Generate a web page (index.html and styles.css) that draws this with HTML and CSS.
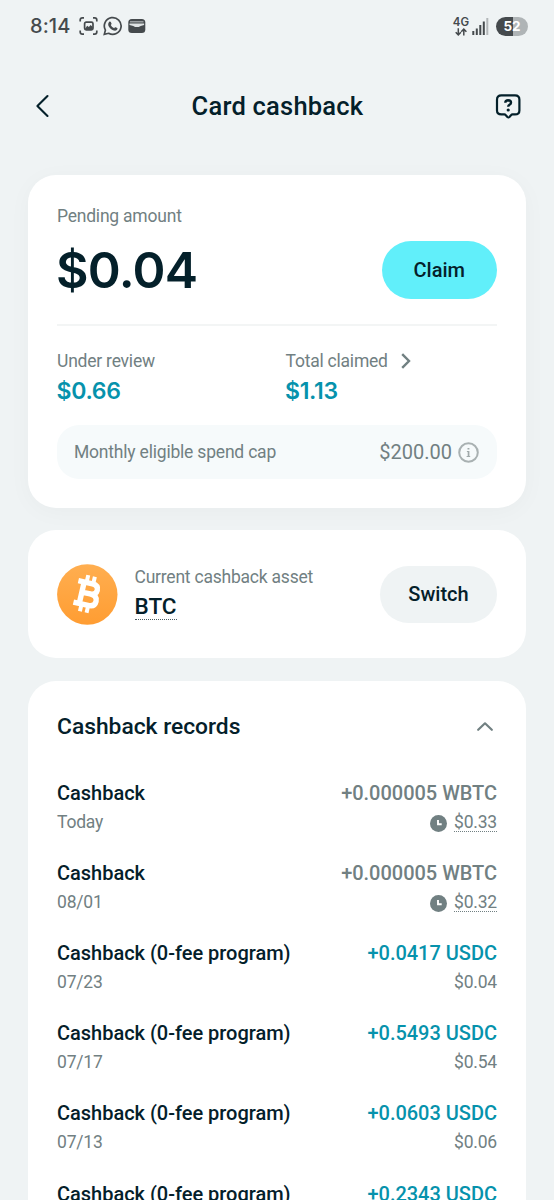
FILE: index.html
```html
<!DOCTYPE html>
<html lang="en">
<head>
<meta charset="utf-8">
<title>Card cashback</title>
<link rel="stylesheet" href="styles.css">
</head>
<body>
<div class="screen">
  <div class="status">
    <span class="time">8:14</span>
    <svg class="status-icons" width="68" height="20" viewBox="0 0 68 20" fill="none" stroke="#454a4d" stroke-width="1.7">
      <path d="M1.200 5.500V4Q1.200 1.800 3.400 1.800H5M14 1.800H15.600Q17.800 1.800 17.800 4V5.500M17.800 14.500V16Q17.800 18.200 15.600 18.200H14M5 18.200H3.400Q1.200 18.200 1.200 16V14.500"/>
      <rect x="5.600" y="6.200" width="8.400" height="7.600" rx="1.600"/>
      <path d="M6 12.800l2.200-3 1.700 1.200 1.700-1.900 2.200 2v2H6z" fill="#454a4d" stroke="none"/>
      <path d="M25.300 18.400l1.100-4.300a8.400 8.400 0 1 1 3.200 3.200z"/>
      <path d="M30.300 5.700c.5-.5 1.200-.4 1.500.2l.7 1.600c.2.500-.4 1.100-.7 1.500.7 1.500 1.800 2.500 3.300 3.200.5-.4.900-1.200 1.500-.9l1.600.8c.9.600-.1 2.200-1.200 2.500-3.600.7-8.600-4-7.700-7.200.2-.7.600-1.300 1-1.700z" fill="#454a4d" stroke="none"/>
      <rect x="49.300" y="3" width="17" height="14" rx="3.500" fill="#454a4d" stroke="none"/>
      <path d="M51 5.800h13.500" stroke="#a9adaf" stroke-width="1.300"/>
      <path d="M50.500 7.600h14.600v1.500l-3.400.8q-4 2.400-7.400 0l-3.800-.8z" fill="#dfe3e4" stroke="none"/>
    </svg>
    <div class="network">
      <span class="net-label">4G</span>
      <svg width="12" height="8" viewBox="0 0 12 8" fill="none" stroke="#454a4d" stroke-width="1.500"><path d="M3.300.3v6.400M.7 4.300l2.600 2.600 2.600-2.600M8.800 7.600V1.200M6.200 3.700l2.600-2.600 2.600 2.600"/></svg>
    </div>
    <svg class="signal" width="17" height="17" viewBox="0 0 17 17"><path d="M.3 13h2v4h-2zM3.800 10.500h2V17h-2zM7.300 7h2v10h-2zM10.800 3.500h2V17h-2z" fill="#454a4d"/><path d="M14.300 0h2v17h-2z" fill="#b3b7b9"/></svg>
    <div class="battery">52</div>
  </div>

  <header class="topbar">
    <svg width="16" height="24" viewBox="0 0 16 24" fill="none" stroke="#04202a" stroke-width="2.100"><path d="M12.500 2L2.400 12 12.500 22" stroke-linecap="round" stroke-linejoin="round"/></svg>
    <h1>Card cashback</h1>
    <svg width="26" height="28" viewBox="0 0 26 28" fill="none" stroke="#04202a" stroke-width="2.200" stroke-linejoin="round"><path d="M6.400 3.300H20Q24.400 3.300 24.400 7.700V18.400Q24.400 22.400 20 22.400H17.500Q16.700 22.400 16.200 23L14.400 25Q13.400 26 12.400 25L10.600 23Q10.100 22.400 9.300 22.400H6.400Q2 22.400 2 18.400V7.700Q2 3.300 6.400 3.300Z"/><path d="M10.300 10.800Q10.400 8.300 13.200 8.300 16 8.400 16 10.700 16 12 14.500 12.800 13.200 13.600 13.200 14.800" stroke-width="2.400"/><circle cx="13.200" cy="18" r="1.600" fill="#04202a" stroke="none"/></svg>
  </header>

  <main>
    <section class="card summary">
      <div class="label">Pending amount</div>
      <div class="pending"><span class="big">$0.04</span><button class="btn claim">Claim</button></div>
      <div class="stats">
        <div><div class="label">Under review</div><div class="stat">$0.66</div></div>
        <div><div class="label">Total claimed <svg width="10" height="16" viewBox="0 0 10 16" fill="none" stroke="#718082" stroke-width="2.400"><path d="M1.200 1.200L8 8 1.200 14.800"/></svg></div><div class="stat">$1.13</div></div>
      </div>
      <div class="cap">
        <span class="cap-name">Monthly eligible spend cap</span>
        <span class="cap-value">$200.00</span>
        <svg width="21" height="21" viewBox="0 0 21 21"><circle cx="10.500" cy="10.500" r="9.300" fill="none" stroke="#a9b1b2" stroke-width="2"/><path d="M9.500 5.900h1.900v1.700H9.500zM8.900 9h2.500v4.900h.8V15H8.600v-1.100h1.100v-3.800h-.8z" fill="#a0a9aa"/></svg>
      </div>
    </section>

    <section class="card asset">
      <svg width="61" height="61" viewBox="0 0 61 61">
        <defs><linearGradient id="coin" x1="0" y1="0" x2="0" y2="1"><stop offset="0" stop-color="#ffae50"/><stop offset="1" stop-color="#ff9d32"/></linearGradient></defs>
        <circle cx="30.300" cy="30.500" r="30.200" fill="url(#coin)"/>
        <g transform="translate(30.600 30) rotate(13)" fill="none" stroke="#fff">
          <path d="M-12-11H2.500Q8.600-11 8.600-5.700 8.600-.6 2.500-.6H-5M2.500-.6Q9.900-.4 9.900 5.200 9.900 11 3 11H-12M-6-11V11" stroke-width="5.400"/>
          <path d="M-3.600-18.500V-12M3.200-18.500V-12M-3.600 12V18.500M3.200 12V18.500" stroke-width="4"/>
        </g>
      </svg>
      <div class="asset-text"><div class="label">Current cashback asset</div><span class="ticker">BTC</span></div>
      <button class="btn switch">Switch</button>
    </section>

    <section class="card records">
      <div class="records-head"><h2>Cashback records</h2><svg width="16" height="10" viewBox="0 0 16 10" fill="none" stroke="#718082" stroke-width="2.200"><path d="M1.200 7.800L8 1.300 14.800 7.800" stroke-linecap="round" stroke-linejoin="round"/></svg></div>
      <div class="record"><span class="title">Cashback</span><span class="amount review">+0.000005 WBTC</span><span class="date">Today</span><span class="fiat"><svg class="clock" width="17" height="17" viewBox="0 0 17 17"><circle cx="8.500" cy="8.500" r="8.500" fill="#718082"/><path d="M8 5v4.200h3.700" fill="none" stroke="#fff" stroke-width="1.900"/></svg><span class="dotted">$0.33</span></span></div>
      <div class="record"><span class="title">Cashback</span><span class="amount review">+0.000005 WBTC</span><span class="date">08/01</span><span class="fiat"><svg class="clock" width="17" height="17" viewBox="0 0 17 17"><circle cx="8.500" cy="8.500" r="8.500" fill="#718082"/><path d="M8 5v4.200h3.700" fill="none" stroke="#fff" stroke-width="1.900"/></svg><span class="dotted">$0.32</span></span></div>
      <div class="record"><span class="title">Cashback (0-fee program)</span><span class="amount">+0.0417 USDC</span><span class="date">07/23</span><span class="fiat">$0.04</span></div>
      <div class="record"><span class="title">Cashback (0-fee program)</span><span class="amount">+0.5493 USDC</span><span class="date">07/17</span><span class="fiat">$0.54</span></div>
      <div class="record"><span class="title">Cashback (0-fee program)</span><span class="amount">+0.0603 USDC</span><span class="date">07/13</span><span class="fiat">$0.06</span></div>
      <div class="record"><span class="title">Cashback (0-fee program)</span><span class="amount">+0.2343 USDC</span></div>
    </section>
  </main>
</div>
</body>
</html>
```
FILE: styles.css
```css
* { box-sizing: border-box; }
body { margin: 0; background: #eff3f4; color: #04202a; font-family: Roboto, "Liberation Sans", sans-serif; }
h1, h2 { margin: 0; font-weight: 500; }
svg { display: block; flex: none; }
.screen { height: 1200px; overflow: hidden; }
.status { height: 52px; padding: 0 26px 0 30px; display: flex; align-items: center; color: #454a4d; font-family: Inter, sans-serif; }
.time { width: 49px; font-size: 20px; font-weight: 500; letter-spacing: 0.1px; }
.network { margin-left: auto; display: flex; flex-direction: column; align-items: center; gap: 1px; }
.net-label { font-size: 11.5px; line-height: 10px; font-weight: 600; }
.signal { margin: 0 7px 0 3px; }
.battery { width: 32px; height: 19px; border-radius: 10px; background: linear-gradient(to right, #454a4d 52%, #afb4b6 52%); color: #fff; font-size: 13.5px; line-height: 19px; font-weight: 700; text-align: center; }
.topbar { height: 108px; padding: 0 33px 0 35px; display: flex; align-items: center; }
.topbar h1 { flex: 1; padding-left: 9px; text-align: center; font-size: 25.5px; letter-spacing: 0.22px; }
main { padding: 15px 28px 0; display: flex; flex-direction: column; gap: 23px; }
.card { background: #fff; border-radius: 28px; padding: 0 29px; }
.summary { height: 332.5px; margin-bottom: -0.5px; padding-top: 30px; box-shadow: 0 4px 24px rgba(4, 32, 42, 0.03); }
.label { display: flex; align-items: center; font-size: 17.5px; letter-spacing: -0.22px; line-height: 22px; color: #718082; }
.stats .label svg { margin-left: 13px; }
.pending { height: 99px; border-bottom: 2px solid #f3f5f5; display: flex; justify-content: space-between; padding-top: 14.4px; }
.big { margin: -1px 0 0 -1px; font: 600 50px/60px Inter, sans-serif; letter-spacing: -0.7px; }
.btn { border: 0; padding: 0; height: 58px; border-radius: 29px; color: #04202a; font: 500 20px/58px Roboto, sans-serif; text-align: center; }
.claim { width: 115.5px; background: #61effa; }
.stats { display: grid; grid-template-columns: 228.5px 1fr; padding-top: 24px; }
.stat { margin: 5px 0 0 -0.5px; font: 600 23px/28px Inter, sans-serif; letter-spacing: -0.3px; color: #0692ac; }
.cap { height: 54px; margin-top: 20px; padding: 0 18px 0 17px; border-radius: 22px; background: #f6fafb; display: flex; align-items: center; color: #718082; }
.cap-name { font-size: 17.5px; letter-spacing: -0.2px; padding-bottom: 1px; }
.cap-value { font-size: 20px; margin: 0 6px 0 auto; }
.asset { height: 128px; display: flex; align-items: center; }
.asset-text { margin: -2px 0 0 16.5px; }
.ticker { display: inline-block; height: 27px; margin-top: 5px; border-bottom: 1px dotted #4b5c61; font-size: 22.5px; line-height: 27px; font-weight: 500; }
.switch { width: 117px; height: 57px; line-height: 57px; margin-left: auto; background: #eff3f4; }
.records { height: 560px; }
.records-head { height: 91px; display: flex; justify-content: space-between; align-items: center; padding-right: 4px; }
.records-head h2 { font-size: 22.8px; }
.record { height: 80.2px; padding-top: 6.6px; display: grid; grid-template-columns: 1fr auto; grid-template-rows: 28px 22px; row-gap: 4px; align-items: center; align-content: start; }
.title, .amount { font-size: 20px; font-weight: 500; line-height: 28px; letter-spacing: -0.02px; }
.amount { color: #0692ac; text-align: right; }
.review { color: #718082; }
.date, .fiat { font-size: 17.5px; letter-spacing: -0.2px; line-height: 22px; color: #718082; }
.fiat { display: flex; justify-content: flex-end; align-items: center; }
.clock { margin: 3px 7px 0 0; }
.dotted { height: 20px; line-height: 20px; border-bottom: 1px dotted #718082; }
```
